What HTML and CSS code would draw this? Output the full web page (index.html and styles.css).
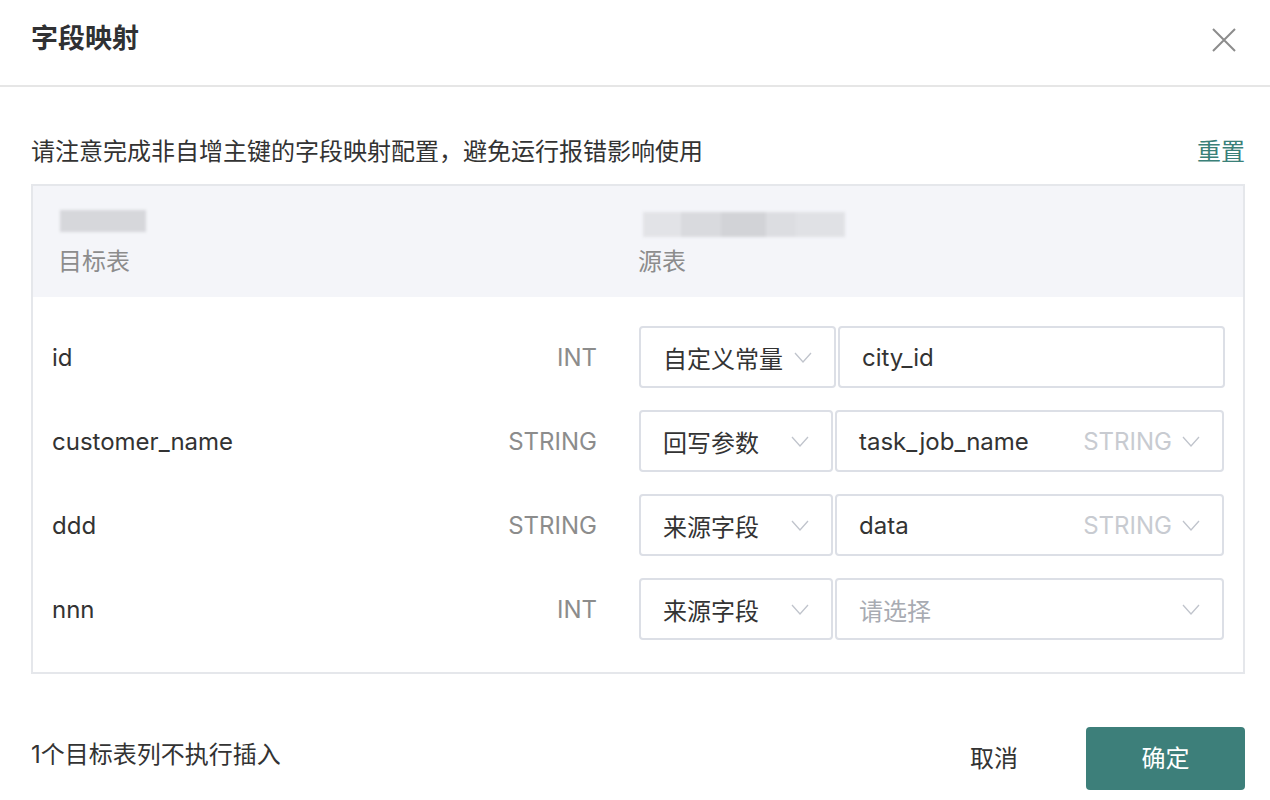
FILE: index.html
```html
<!DOCTYPE html>
<html lang="zh">
<head>
<meta charset="utf-8">
<title>字段映射</title>
<link rel="stylesheet" href="styles.css">
</head>
<body>
<div class="dialog">
  <div class="header">
    <div class="title">字段映射</div>
    <svg class="close" width="24" height="24" viewBox="0 0 24 24"><path d="M1 1 L23 23 M23 1 L1 23" stroke="#8c8c8c" stroke-width="2" fill="none"/></svg>
  </div>
  <div class="content">
    <div class="notice">
      <span>请注意完成非自增主键的字段映射配置，避免运行报错影响使用</span>
      <span class="reset">重置</span>
    </div>
    <div class="table">
      <div class="thead">
        <div class="hcol left">
          <div class="blur-area"><div class="blur blur-l"></div></div>
          <div class="hlabel">目标表</div>
        </div>
        <div class="hcol right">
          <div class="blur-area"><div class="blur blur-r"><i class="b1"></i><i class="b2"></i><i class="b3"></i><i class="b4"></i><i class="b5"></i></div></div>
          <div class="hlabel">源表</div>
        </div>
      </div>
      <div class="tbody">
        <div class="row">
          <div class="target"><span class="name">id</span><span class="type">INT</span></div>
          <div class="source">
            <div class="sel wide"><span>自定义常量</span><svg class="arrow" viewBox="0 0 18 11"><polyline points="1,1 9,10 17,1"/></svg></div>
            <div class="inp first"><span class="val">city_id</span></div>
          </div>
        </div>
        <div class="row">
          <div class="target"><span class="name">customer_name</span><span class="type">STRING</span></div>
          <div class="source">
            <div class="sel"><span>回写参数</span><svg class="arrow" viewBox="0 0 18 11"><polyline points="1,1 9,10 17,1"/></svg></div>
            <div class="inp"><span class="val">task_job_name</span><span class="stype">STRING</span><svg class="arrow" viewBox="0 0 18 11"><polyline points="1,1 9,10 17,1"/></svg></div>
          </div>
        </div>
        <div class="row">
          <div class="target"><span class="name">ddd</span><span class="type">STRING</span></div>
          <div class="source">
            <div class="sel"><span>来源字段</span><svg class="arrow" viewBox="0 0 18 11"><polyline points="1,1 9,10 17,1"/></svg></div>
            <div class="inp"><span class="val">data</span><span class="stype">STRING</span><svg class="arrow" viewBox="0 0 18 11"><polyline points="1,1 9,10 17,1"/></svg></div>
          </div>
        </div>
        <div class="row">
          <div class="target"><span class="name">nnn</span><span class="type">INT</span></div>
          <div class="source">
            <div class="sel"><span>来源字段</span><svg class="arrow" viewBox="0 0 18 11"><polyline points="1,1 9,10 17,1"/></svg></div>
            <div class="inp"><span class="val placeholder">请选择</span><svg class="arrow" viewBox="0 0 18 11"><polyline points="1,1 9,10 17,1"/></svg></div>
          </div>
        </div>
      </div>
    </div>
  </div>
  <div class="footer">
    <div class="info">1个目标表列不执行插入</div>
    <div class="actions">
      <button class="btn cancel">取消</button>
      <button class="btn ok">确定</button>
    </div>
  </div>
</div>
</body>
</html>
```

FILE: styles.css
```css
* { box-sizing: border-box; }
html, body { margin: 0; padding: 0; background: #fff; }
body {
  font-family: "Inter", "Noto Sans CJK SC", sans-serif;
  font-size: 24px;
  color: #333;
  width: 1270px;
  height: 800px;
  overflow: hidden;
}
.header {
  height: 87px;
  border-bottom: 2px solid #e6e6e6;
  display: flex;
  align-items: center;
  justify-content: space-between;
  padding: 0 34px 10px 31px;
}
.title {
  font-size: 27px;
  font-weight: 700;
  color: #303133;
  line-height: 32px;
  margin-top: 3px;
}
.close { display: block; margin-top: 4px; }
.content { padding: 0 25px 0 31px; }
.notice {
  height: 97px;
  display: flex;
  align-items: flex-end;
  justify-content: space-between;
  padding-bottom: 17px;
  line-height: 30px;
  color: #333;
}
.reset { color: #3a8078; }
.table {
  border: 2px solid #e5e7eb;
  height: 490px;
}
.thead {
  background: #f4f5f9;
  height: 111px;
  display: flex;
  padding-top: 24px;
}
.hcol { display: flex; flex-direction: column; }
.hcol.left { width: 605px; padding-left: 25px; }
.hcol.right { padding-left: 0; }
.blur-area { height: 26px; }
.hlabel { color: #8c8c8c; margin-top: 13px; line-height: 26px; }
.blur { filter: blur(1.6px); }
.blur-l { width: 86px; background: #d6d7db; margin-left: 2px; height: 22px; }
.blur-r { display: flex; width: 202px; margin-left: 5px; margin-top: 2px; height: 25px; }
.blur-r i { display: block; height: 100%; }
.blur-r .b1 { width: 38px; background: #e2e3e7; }
.blur-r .b2 { width: 40px; background: #d9dade; }
.blur-r .b3 { width: 45px; background: #d2d3d7; }
.blur-r .b4 { width: 30px; background: #dcdde1; }
.blur-r .b5 { width: 49px; background: #e0e1e5; }
.tbody { padding-top: 29px; }
.row {
  display: flex;
  align-items: center;
  height: 62px;
  margin-bottom: 22px;
}
.target {
  width: 606px;
  display: flex;
  justify-content: space-between;
  padding-left: 19px;
  padding-right: 42px;
}
.type { color: #8c8c8c; }
.source { display: flex; height: 62px; }
.sel, .inp {
  border: 2px solid #dcdfe6;
  border-radius: 4px;
  display: flex;
  align-items: center;
  height: 62px;
}
.sel {
  width: 194px;
  padding-left: 22px;
  padding-right: 22px;
  justify-content: space-between;
  margin-right: 2px;
}
.sel.wide { width: 197px; padding-right: 22px; }
.inp {
  width: 389px;
  padding-left: 22px;
  padding-right: 22px;
}
.inp.first { width: 387px; padding-left: 22px; }
.val { flex: 1; }
.placeholder { color: #a8abb2; }
.stype { color: #c8cbd1; margin-right: 10px; }
.arrow {
  width: 18px;
  height: 11px;
  fill: none;
  stroke: #c0c4cc;
  stroke-width: 1.3;
  flex: none;
}
.footer {
  display: flex;
  justify-content: space-between;
  align-items: center;
  padding: 0 25px 0 31px;
  margin-top: 53px;
}
.info { color: #333; margin-top: -8px; line-height: 30px; }
.actions { display: flex; align-items: center; }
.btn {
  font-family: inherit;
  font-size: 24px;
  border: none;
  background: none;
  cursor: pointer;
  padding: 0;
  line-height: 30px;
}
.cancel { color: #333; width: 80px; height: 63px; margin-right: 52px; }
.ok {
  width: 159px;
  height: 63px;
  background: #3d7f7a;
  color: #fff;
  border-radius: 4px;
}
```
